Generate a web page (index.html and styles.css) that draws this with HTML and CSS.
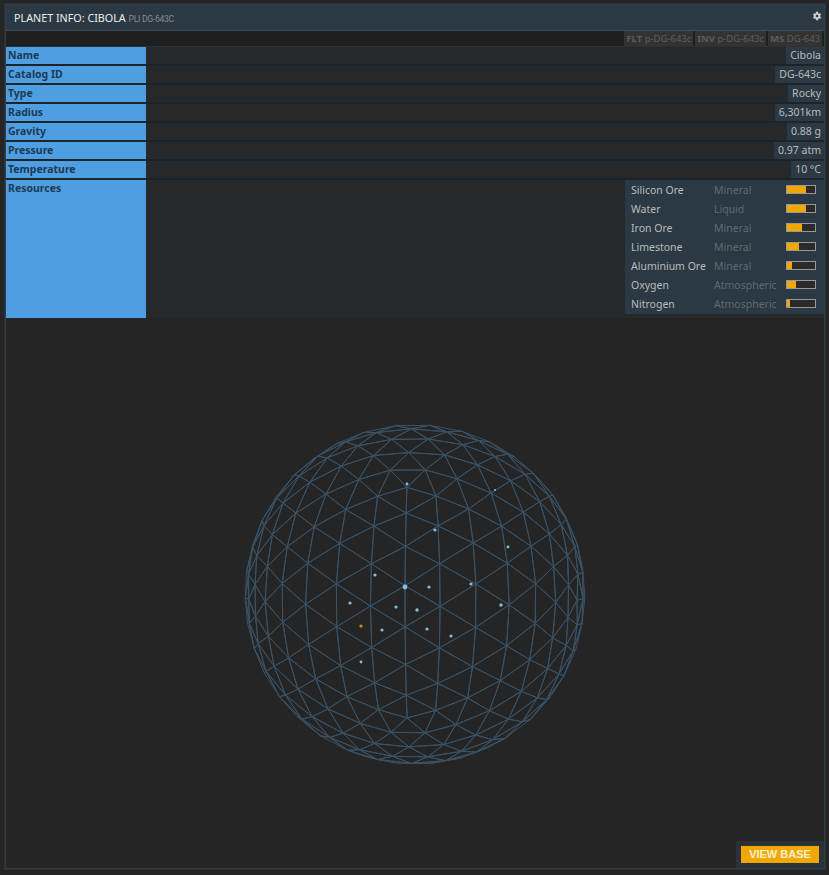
FILE: index.html
```html
<!DOCTYPE html>
<html lang="en">
<head>
<meta charset="utf-8">
<title>Planet Info</title>
<link rel="stylesheet" href="styles.css">
</head>
<body>
<div class="window">
  <header class="title-bar">
    <div class="title">PLANET INFO: CIBOLA <span class="title-cmd">PLI DG-643C</span></div>
    <svg class="gear" viewBox="0 0 24 24"><path d="M19.4 13a7.500 7.500 0 0 0 0-2l2.600-1.700-2.400-4.100-2.800 1.100a7.600 7.600 0 0 0-1.700-1L14.700 2h-5.200l-.4 3.300a7.600 7.600 0 0 0-1.700 1L4.600 5.200 2.200 9.300 4.800 11a7.500 7.500 0 0 0 0 2l-2.600 1.700 2.400 4.100 2.800-1.100a7.600 7.600 0 0 0 1.700 1l.4 3.300h5.200l.4-3.300a7.600 7.600 0 0 0 1.700-1l2.800 1.100 2.400-4.100zM12 15a3 3 0 1 1 0-6 3 3 0 0 1 0 6z"/></svg>
  </header>
  <div class="links">
    <span class="link"><b>FLT</b> p-DG-643c</span>
    <span class="link"><b>INV</b> p-DG-643c</span>
    <span class="link"><b>MS</b> DG-643</span>
  </div>
  <div class="form">
    <div class="row"><div class="label">Name</div><div class="field"><span class="value">Cibola</span></div></div>
    <div class="row"><div class="label">Catalog ID</div><div class="field"><span class="value">DG-643c</span></div></div>
    <div class="row"><div class="label">Type</div><div class="field"><span class="value">Rocky</span></div></div>
    <div class="row"><div class="label">Radius</div><div class="field"><span class="value">6,301km</span></div></div>
    <div class="row"><div class="label">Gravity</div><div class="field"><span class="value">0.88 g</span></div></div>
    <div class="row"><div class="label">Pressure</div><div class="field"><span class="value">0.97 atm</span></div></div>
    <div class="row"><div class="label">Temperature</div><div class="field"><span class="value">10 °C</span></div></div>
    <div class="row row-tall">
      <div class="label">Resources</div>
      <div class="field">
        <div class="resources">
          <div class="res"><span class="res-name">Silicon Ore</span><span class="res-type">Mineral</span><span class="bar"><span class="fill" style="width:67%"></span></span></div>
          <div class="res"><span class="res-name">Water</span><span class="res-type">Liquid</span><span class="bar"><span class="fill" style="width:67%"></span></span></div>
          <div class="res"><span class="res-name">Iron Ore</span><span class="res-type">Mineral</span><span class="bar"><span class="fill" style="width:54%"></span></span></div>
          <div class="res"><span class="res-name">Limestone</span><span class="res-type">Mineral</span><span class="bar"><span class="fill" style="width:43%"></span></span></div>
          <div class="res"><span class="res-name">Aluminium Ore</span><span class="res-type">Mineral</span><span class="bar"><span class="fill" style="width:19%"></span></span></div>
          <div class="res"><span class="res-name">Oxygen</span><span class="res-type">Atmospheric</span><span class="bar"><span class="fill" style="width:33%"></span></span></div>
          <div class="res"><span class="res-name">Nitrogen</span><span class="res-type">Atmospheric</span><span class="bar"><span class="fill" style="width:9%"></span></span></div>
        </div>
      </div>
    </div>
  </div>
  <div class="map">
    <svg class="globe" id="globe" viewBox="0 0 829 875"></svg>
    <div class="actions"><button class="btn">VIEW BASE</button></div>
  </div>
</div>
<script src="globe.js"></script>
</body>
</html>
```
FILE: styles.css
```css
* { box-sizing: border-box; }
html, body { margin: 0; height: 100%; background: #252525; overflow: hidden; }
body { padding: 4px 4px 6px 5px; font-family: "Noto Sans", "Open Sans", sans-serif; font-size: 10.5px; color: #bbb; }
.window { height: 100%; display: flex; flex-direction: column; border: 1px solid #2f3d47; box-shadow: 0 0 0 1px #2a3138; position: relative; }
.title-bar { height: 26px; flex: none; display: flex; align-items: center; justify-content: space-between; padding: 0 2px 0 8px; background: #2a3943; border-bottom: 1px solid #3a4e5e; }
.title { font-size: 10.75px; color: #eee; }
.title-cmd { font-family: "Roboto", sans-serif; font-size: 8.6px; color: #8a8a8a; letter-spacing: -.28px; }
.gear { width: 10px; height: 10px; fill: #ccc; margin-bottom: 3px; }
.links { height: 16px; flex: none; display: flex; justify-content: flex-end; gap: 2px; padding-right: 2px; background: #1f1f1f; border-bottom: 1px solid #2a3138; }
.link { background: #333; color: #5f5f5f; padding: 0 2px; line-height: 15px; font-size: 9.5px; }
.link b { font-weight: 700; color: #5c5c5c; }
.row { display: flex; height: 19px; background: #25292c; border-bottom: 2px solid #1e2328; }
.row-tall { height: 138px; border-bottom: 0; }
.label { width: 140px; flex: none; background: #4e9fe2; color: #1c3a52; font-weight: 700; padding-left: 2px; line-height: 17px; }
.field { flex: 1; display: flex; justify-content: flex-end; background: #25292c; }
.value { background: #2a3943; color: #bbb; padding: 0 3px 0 4px; line-height: 17px; }
.resources { background: #2a3943; padding: 0 8px 0 6px; height: 134px; }
.res { display: flex; align-items: center; height: 19px; }
.res-name { width: 83px; color: #bbb; }
.res-type { width: 72px; color: #5f6a70; }
.bar { width: 30px; height: 9px; background: #2a2a2a; border: 1px solid #999; display: block; }
.fill { display: block; height: 100%; background: #f0a800; }
.map { flex: 1; position: relative; min-height: 0; }
.globe { position: fixed; left: 0; top: 0; width: 829px; height: 875px; fill: none; }
.mesh { stroke: #3a5265; stroke-width: 1; }
.dot { fill: #86bddd; }
.dot-o { fill: #d88a20; }
.actions { position: absolute; right: 0; bottom: 0; background: #2b3138; padding: 5px; display: flex; }
.btn { width: 78px; height: 17px; border: 0; padding: 0 0 2px; background: #f0a800; color: #fbf0d0; font-family: "Liberation Sans", Arial, sans-serif; font-weight: 700; font-size: 11px; }
```
FILE: globe.js
```js
(function () {
  var svg = document.getElementById('globe');
  var NS = 'http://www.w3.org/2000/svg';
  var cx = 415, cy = 594.5, limb = 170, D = 3.2;
  var K = limb * Math.sqrt(D * D - 1);
  var rx = 2.9 * Math.PI / 180, ry = -2.44 * Math.PI / 180;
  var t = (1 + Math.sqrt(5)) / 2;
  var V = [[-1,t,0],[1,t,0],[-1,-t,0],[1,-t,0],[0,-1,t],[0,1,t],[0,-1,-t],[0,1,-t],[t,0,-1],[t,0,1],[-t,0,-1],[-t,0,1]];
  var F = [[0,11,5],[0,5,1],[0,1,7],[0,7,10],[0,10,11],[1,5,9],[5,11,4],[11,10,2],[10,7,6],[7,1,8],[3,9,4],[3,4,2],[3,2,6],[3,6,8],[3,8,9],[4,9,5],[2,4,11],[6,2,10],[8,6,7],[9,8,1]];
  var n = 7;
  function norm(p) { var l = Math.hypot(p[0], p[1], p[2]); return [p[0]/l, p[1]/l, p[2]/l]; }
  function rot(p) {
    var x = p[0], y = p[1], z = p[2];
    var x1 = x * Math.cos(ry) + z * Math.sin(ry), z1 = -x * Math.sin(ry) + z * Math.cos(ry);
    var y1 = y * Math.cos(rx) - z1 * Math.sin(rx), z2 = y * Math.sin(rx) + z1 * Math.cos(rx);
    return [x1, y1, z2];
  }
  function pt(a, b, c, i, j) {
    var k = n - i - j;
    return rot(norm([0,1,2].map(function (d) { return (a[d]*k + b[d]*i + c[d]*j) / n; })));
  }
  function s(p) {
    var f = K / (D - p[2]);
    return (cx + p[0]*f).toFixed(2) + ' ' + (cy - p[1]*f).toFixed(2);
  }
  var d = '';
  function draw(tri) {
    var m = [0,1,2].map(function (a) { return (tri[0][a] + tri[1][a] + tri[2][a]) / 3; });
    /* keep only faces turned toward the camera at (0,0,D) */
    if (m[0]*(-m[0]) + m[1]*(-m[1]) + m[2]*(D - m[2]) <= 0) return;
    d += 'M' + s(tri[0]) + 'L' + s(tri[1]) + 'L' + s(tri[2]) + 'Z';
  }
  F.forEach(function (f) {
    var a = V[f[0]], b = V[f[1]], c = V[f[2]];
    for (var i = 0; i < n; i++) for (var j = 0; j < n - i; j++) {
      draw([pt(a,b,c,i,j), pt(a,b,c,i+1,j), pt(a,b,c,i,j+1)]);
      if (i + j < n - 1) draw([pt(a,b,c,i+1,j), pt(a,b,c,i+1,j+1), pt(a,b,c,i,j+1)]);
    }
  });
  var path = document.createElementNS(NS, 'path');
  path.setAttribute('d', d);
  path.setAttribute('class', 'mesh');
  svg.appendChild(path);
  var dots = [[407,484,1.4],[435,530,1.6],[495,490,1],[508,547,1.4],[375,575,1.6],[405,587,2.4],[429,587,1.6],[471,584,1.6],[350,603,1.6],[396,607,1.6],[417,610,1.7],[501,605,1.7],[361,626,1.6,1],[382,630,1.6],[427,629,1.6],[451,636,1.6],[361,662,1.4]];
  dots.forEach(function (q) {
    var c = document.createElementNS(NS, 'circle');
    c.setAttribute('cx', q[0]); c.setAttribute('cy', q[1]); c.setAttribute('r', q[2]);
    c.setAttribute('class', q[3] ? 'dot-o' : 'dot');
    svg.appendChild(c);
  });
})();
```
